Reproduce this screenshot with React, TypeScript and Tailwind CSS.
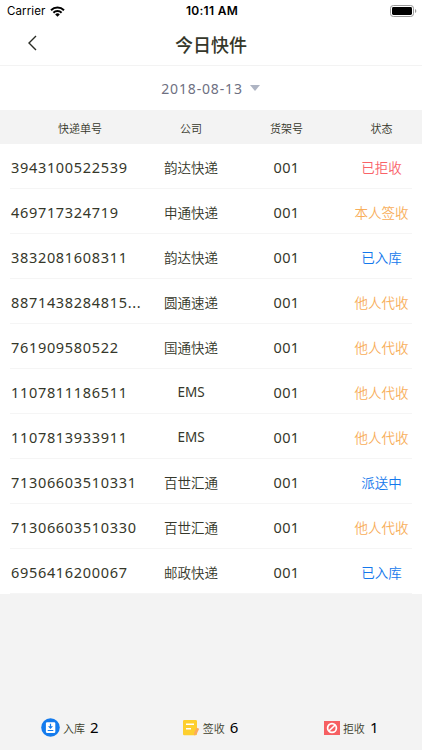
import React from "react";

const latin = "font-['Noto_Sans','Noto_Sans_CJK_SC',sans-serif]";
const cjk = "font-['Noto_Sans_CJK_SC',sans-serif]";
const system = "font-['Inter','Liberation_Sans',sans-serif]";

const tones = {
  red: "text-[#f96268]",
  orange: "text-[#f8ae5a]",
  blue: "text-[#1478ec]",
};

type Parcel = { no: string; company: string; status: string; tone: keyof typeof tones };

const parcels: Parcel[] = [
  { no: "3943100522539", company: "韵达快递", status: "已拒收", tone: "red" },
  { no: "469717324719", company: "申通快递", status: "本人签收", tone: "orange" },
  { no: "3832081608311", company: "韵达快递", status: "已入库", tone: "blue" },
  { no: "8871438284815...", company: "圆通速递", status: "他人代收", tone: "orange" },
  { no: "761909580522", company: "国通快递", status: "他人代收", tone: "orange" },
  { no: "1107811186511", company: "EMS", status: "他人代收", tone: "orange" },
  { no: "1107813933911", company: "EMS", status: "他人代收", tone: "orange" },
  { no: "71306603510331", company: "百世汇通", status: "派送中", tone: "blue" },
  { no: "71306603510330", company: "百世汇通", status: "他人代收", tone: "orange" },
  { no: "6956416200067", company: "邮政快递", status: "已入库", tone: "blue" },
];

function StatusBar() {
  return (
    <div className={`flex h-[22px] items-center justify-between pr-[5px] pl-[7px] text-[11.5px] leading-none text-black ${system}`}>
      <div className="flex w-[100px] items-center gap-[5px]">
        <span className="pt-[2px] tracking-[0.1px]">Carrier</span>
        <svg width="15" height="11" viewBox="0 0 15 11" fill="none" stroke="#000" strokeWidth="2">
          <path d="M1 4.2a9.3 9.3 0 0 1 13 0" />
          <path d="M3.4 6.8a5.8 5.8 0 0 1 8.2 0" />
          <path d="M7.5 10.7 5.2 8.4a3.3 3.3 0 0 1 4.6 0Z" fill="#000" stroke="none" />
        </svg>
      </div>
      <span className="text-[12px] font-semibold tracking-[0.3px]">10:11 AM</span>
      <div className="flex w-[100px] justify-end">
        <svg width="27" height="12" viewBox="0 0 27 12">
          <rect x=".5" y=".5" width="23" height="11" rx="2.8" fill="none" stroke="#999" />
          <rect x="2" y="2" width="20" height="8" rx="1.4" />
          <path d="M25 4v4c1.8-.8 1.8-3.2 0-4Z" fill="#999" />
        </svg>
      </div>
    </div>
  );
}

function InboundIcon() {
  return (
    <svg width="19" height="19" viewBox="0 0 19 19">
      <circle cx="9.5" cy="9.5" r="9.3" fill="#147bed" />
      <rect x="4.9" y="4.2" width="9.4" height="10.8" rx="1.2" fill="#fff" />
      <path d="M8.9 5.8h1.2v2.5h1.9L9.5 10.9 7 8.3h1.9ZM6.7 12h5.6v1.1H6.7Z" fill="#147bed" />
    </svg>
  );
}

function SignedIcon() {
  return (
    <svg width="17" height="16" viewBox="0 0 17 16">
      <path d="M1.3 0h11.4a1.3 1.3 0 0 1 1.3 1.3V14a1.3 1.3 0 0 1-1.3 1.3H1.3A1.3 1.3 0 0 1 0 14V1.3A1.3 1.3 0 0 1 1.3 0Z" fill="#fdcf2e" />
      <path d="M3 4.3h8M3 8.7h5" stroke="#fff" strokeWidth="1.4" />
      <path d="m13.6 7.7 2.6 1.1-2.5 5.2-2.6 1.5.1-2.8Z" fill="#fbaa5c" />
    </svg>
  );
}

function RejectedIcon() {
  return (
    <svg width="16" height="14" viewBox="0 0 16 14">
      <rect width="16" height="14" fill="#f65f62" />
      <circle cx="8" cy="7" r="4.4" fill="none" stroke="#fff" strokeWidth="1.7" />
      <path d="m4.9 10 6.2-6" stroke="#fff" strokeWidth="1.6" />
    </svg>
  );
}

function Total({ icon, label, count }: { icon: React.ReactNode; label: string; count: number }) {
  return (
    <div className="flex flex-1 items-center justify-center pr-px">
      {icon}
      <span className={`mt-[2px] ml-[3px] text-[11px] leading-none font-[350] text-[#3c3e2c] ${cjk}`}>{label}</span>
      <span className={`ml-[5px] text-[15px] leading-none text-black ${latin}`}>{count}</span>
    </div>
  );
}

const columns = "grid grid-cols-[143px_96px_95px_88px] items-center";

export default function App() {
  return (
    <div className="flex h-[750px] w-[422px] flex-col overflow-hidden bg-[#f3f3f3] text-[#35372a]">
      <div className="h-[66px] border-b border-[#f3f3f3] bg-white">
        <StatusBar />
        <div className="grid h-[43px] grid-cols-[60px_1fr_60px] items-center">
          <svg className="-mt-[2px] ml-[27px]" width="11" height="16" viewBox="0 0 11 16" fill="none" stroke="#292b24" strokeWidth="1.4">
            <path d="M9 1 2 8l7 7" />
          </svg>
          <h1 className={`text-center text-[18px] leading-none font-medium ${cjk}`}>今日快件</h1>
        </div>
      </div>
      <div className="flex h-[44px] items-center justify-center gap-[7px] bg-white pt-px pr-px">
        <span className={`text-[14px] leading-none tracking-[0.85px] text-[#6e7082] ${latin}`}>2018-08-13</span>
        <svg className="-mt-[2px]" width="10" height="6" viewBox="0 0 10 6"><path d="M0 0h10L5 6Z" fill="#aeb4c3" /></svg>
      </div>
      <div className={`${columns} h-[34px] pt-[2px] text-center text-[11px] leading-none font-[350] ${cjk}`}>
        <span className="pl-[17px]">快递单号</span>
        <span>公司</span>
        <span>货架号</span>
        <span className="pl-[7px]">状态</span>
      </div>
      <div className={`bg-white leading-none ${latin}`}>
        {parcels.map((p) => (
          <div key={p.no} className="h-[45px]">
            <div className={`${columns} h-[44px] pt-[2px] text-center text-[13.5px]`}>
              <span className="pl-[11px] text-left text-[14.5px] tracking-[0.68px] whitespace-nowrap">{p.no}</span>
              <span className={p.company === "EMS" ? "pt-px font-normal" : "pt-[3px] font-[350]"}>{p.company}</span>
              <span className="text-[14.5px] tracking-[0.3px]">001</span>
              <span className={`pt-[3px] pl-[7px] font-[350] ${tones[p.tone]}`}>{p.status}</span>
            </div>
            <div className="ml-[10px] mr-[10px] h-px bg-[#f5f5f5]" />
          </div>
        ))}
      </div>
      <div className="mt-auto flex h-[45px] items-center">
        <Total icon={<InboundIcon />} label="入库" count={2} />
        <Total icon={<SignedIcon />} label="签收" count={6} />
        <Total icon={<RejectedIcon />} label="拒收" count={1} />
      </div>
    </div>
  );
}
